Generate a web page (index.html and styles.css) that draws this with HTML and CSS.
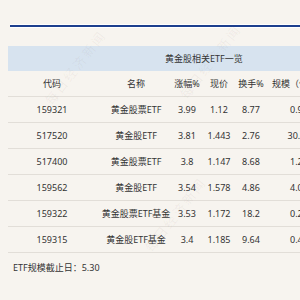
FILE: index.html
```html
<!DOCTYPE html>
<html lang="zh">
<head>
<meta charset="utf-8">
<link rel="stylesheet" href="styles.css">
</head>
<body>
<div class="page">
  <div class="rule"></div>
  <div class="table">
    <div class="title">黄金股相关ETF一览</div>
    <div class="row head">
      <span>代码</span><span>名称</span><span>涨幅%</span><span>现价</span><span>换手%</span><span>规模（亿元）</span>
    </div>
    <div class="row"><span>159321</span><span>黄金股票ETF</span><span>3.99</span><span>1.12</span><span>8.77</span><span>0.95</span></div>
    <div class="row"><span>517520</span><span>黄金股ETF</span><span>3.81</span><span>1.443</span><span>2.76</span><span>30.06</span></div>
    <div class="row"><span>517400</span><span>黄金股票ETF</span><span>3.8</span><span>1.147</span><span>8.68</span><span>1.26</span></div>
    <div class="row"><span>159562</span><span>黄金股ETF</span><span>3.54</span><span>1.578</span><span>4.86</span><span>4.05</span></div>
    <div class="row"><span>159322</span><span>黄金股票ETF基金</span><span>3.53</span><span>1.172</span><span>18.2</span><span>0.25</span></div>
    <div class="row"><span>159315</span><span>黄金股ETF基金</span><span>3.4</span><span>1.185</span><span>9.64</span><span>0.45</span></div>
  </div>
  <div class="note">ETF规模截止日：5.30</div>
  <div class="wm wm1">每日经济新闻</div>
  <div class="wm wm2">每日经济新闻</div>
  <div class="wm wm3">每日经济新闻</div>
</div>
</body>
</html>
```

FILE: styles.css
```css
html, body {
  margin: 0;
  padding: 0;
  background: #f7f4ef;
}
body {
  font-family: "Noto Sans", "Noto Sans CJK SC", sans-serif;
  font-size: 9px;
  color: #333;
  overflow: hidden;
}
.page {
  position: relative;
  width: 300px;
  height: 300px;
  overflow: hidden;
  padding-top: 25px;
  box-sizing: border-box;
}
.rule {
  margin-left: 10px;
  width: 400px;
  height: 2px;
  background: #1d3f8e;
  box-shadow: 0 1px 0 #ffffff, 0 -1px 0 #ffffff;
}
.table {
  margin: 19px 0 0 8px;
  width: 360px;
}
.title {
  height: 25px;
  background: #d7e3ef;
  display: flex;
  align-items: center;
  padding-left: 157px;
  color: #333;
}
.row {
  display: grid;
  grid-template-columns: 88px 80px 22px 42px 22px 74px;
  height: 25px;
  border-bottom: 1px solid #e2ded8;
}
.row span {
  display: flex;
  align-items: center;
  justify-content: center;
  white-space: nowrap;
}
.note {
  margin: 8px 0 0 13px;
  height: 14px;
  line-height: 14px;
}
.wm {
  position: absolute;
  font-size: 13px;
  color: rgba(120, 110, 100, 0.07);
  transform: rotate(-52deg);
  white-space: nowrap;
  letter-spacing: 2px;
}
.wm1 { left: 30px; top: 58px; }
.wm2 { left: 165px; top: 52px; }
.wm3 { left: 130px; top: 205px; }
```
